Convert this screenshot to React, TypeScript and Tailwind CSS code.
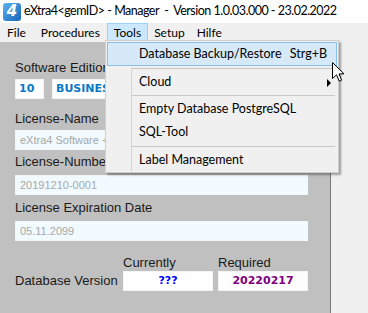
const ui = { fontFamily: 'Lato, "Noto Sans", sans-serif' };
const form = { fontFamily: '"Liberation Sans", Arial, sans-serif' };
const bold = { fontFamily: '"DejaVu Sans", Verdana, sans-serif' };

function AppIcon() {
  return (
    <div className="w-[18px] h-[18px] rounded-[3px] bg-gradient-to-br from-[#5fb4f0] to-[#1266b8] flex items-center justify-center">
      <span className="text-white font-black italic text-[15px] leading-none" style={bold}>
        4
      </span>
    </div>
  );
}

function Label({ children, className = "" }: { children: React.ReactNode; className?: string }) {
  return (
    <div className={`h-4 leading-4 text-[13px] text-[#1a1a1a] whitespace-nowrap ${className}`} style={form}>
      {children}
    </div>
  );
}

function Field({ value, className = "" }: { value: string; className?: string }) {
  return (
    <div
      className={`h-5 w-[293px] bg-[#f0faff] border border-[#f6f6f6] pl-[4px] text-[11px] leading-[18px] text-[#a8a8a8] whitespace-nowrap overflow-hidden ${className}`}
      style={form}
    >
      {value}
    </div>
  );
}

function Sep() {
  return (
    <div className="h-[5px] pl-[26px] pr-[3px] pt-[2px]">
      <div className="h-px bg-[#c8c8c8]" />
    </div>
  );
}

function ToolsMenu() {
  return (
    <div
      className="absolute left-[105px] top-[40px] w-[234px] bg-[#f0f0f0] border border-[#cfcfcf] shadow-[2px_2px_2px_rgba(0,0,0,0.35)] pt-px pb-px text-[12.5px] text-black"
      style={ui}
    >
      <div className="absolute left-[25px] top-[26px] bottom-[1px] w-px bg-[#d4d4d4]" />
      <div className="relative h-6 mx-px bg-[#d6e9f9] border border-[#8cc0ec] flex items-center pl-[31px] pr-[9px] justify-between">
        <span>Database Backup/Restore</span>
        <span>Strg+B</span>
      </div>
      <Sep />
      <div className="relative h-[22px] flex items-center pl-[33px] pr-[4px] justify-between">
        <span>Cloud</span>
        <svg width="6" height="8" viewBox="0 0 6 8" className="mr-[2px] mt-[2px]">
          <path d="M1 0 L5 4 L1 8 Z" fill="#000" />
        </svg>
      </div>
      <Sep />
      <div className="relative h-[23px] flex items-center pl-[33px]">Empty Database PostgreSQL</div>
      <div className="relative h-[23px] flex items-center pl-[33px]">SQL-Tool</div>
      <Sep />
      <div className="relative h-[22px] flex items-center pl-[33px]">Label Management</div>
    </div>
  );
}

function Cursor() {
  return (
    <svg className="absolute left-[332px] top-[62px]" width="13" height="21" viewBox="0 0 13 21">
      <path
        d="M0.5 0.5 L0.5 16.5 L4.5 12.8 L7.2 19.2 L9.6 18.2 L7 11.9 L12 11.9 Z"
        fill="#fff"
        stroke="#000"
        strokeWidth="1"
        strokeLinejoin="round"
      />
    </svg>
  );
}

export default function App() {
  return (
    <div className="relative w-[368px] h-[313px] overflow-hidden bg-[#f0f0f0]">
      {/* title bar */}
      <div className="h-[23px] bg-white flex items-center pl-[3px] gap-[3px]">
        <AppIcon />
        <span className="text-[12.5px] tracking-[-0.5px] text-black whitespace-pre" style={ui}>
          {"eXtra4<gemID> - Manager  -  Version 1.0.03.000 - 23.02.2022"}
        </span>
      </div>

      {/* menu bar */}
      <div className="h-[19px] bg-[#f0f0f0] flex items-stretch text-[12px] text-black" style={ui}>
        <div className="px-[7px] flex items-center">File</div>
        <div className="px-[7px] ml-px flex items-center">Procedures</div>
        <div className="px-[6px] flex items-center bg-[#cce8ff] border border-[#99d1ff]">Tools</div>
        <div className="px-[6px] flex items-center">Setup</div>
        <div className="px-[6px] flex items-center">Hilfe</div>
      </div>

      {/* body */}
      <div className="flex h-[271px]">
        <div className="w-[331px] bg-[#c0c0c0] border-r border-[#7a7a7a] pl-[15px]">
          <Label className="mt-[18px]">Software Edition</Label>
          <div className="mt-[3px] flex gap-[8px]">
            <div
              className="h-5 w-[29px] bg-white border border-[#f4f4f4] pl-[3px] text-[11px] leading-[18px] font-bold text-[#0a78c8]"
              style={bold}
            >
              10
            </div>
            <div
              className="h-5 w-[256px] bg-white border border-[#f4f4f4] pl-[3px] text-[11px] leading-[18px] font-bold text-[#0a78c8]"
              style={bold}
            >
              BUSINESS
            </div>
          </div>

          <Label className="mt-[12px]">License-Name</Label>
          <Field className="mt-[3px]" value="eXtra4 Software + Consulting" />

          <Label className="mt-[4px]">License-Number</Label>
          <Field className="mt-[5px]" value="20191210-0001" />

          <Label className="mt-[5px]">License Expiration Date</Label>
          <Field className="mt-[5px]" value="05.11.2099" />

          <div className="mt-[14px] flex pl-[108px] gap-[5px]">
            <Label className="w-[90px]">Currently</Label>
            <Label className="w-[90px]">Required</Label>
          </div>
          <div className="flex items-center gap-[5px]">
            <Label className="w-[103px]">Database Version</Label>
            <div
              className="h-5 w-[90px] bg-white border border-[#f4f4f4] text-center text-[11px] leading-[18px] font-bold text-[#0000ff]"
              style={bold}
            >
              ???
            </div>
            <div
              className="h-5 w-[90px] bg-white border border-[#f4f4f4] text-center text-[11px] leading-[18px] font-bold text-[#800080]"
              style={bold}
            >
              20220217
            </div>
          </div>
        </div>
        <div className="flex-1 bg-[#f0f0f0]" />
      </div>

      <ToolsMenu />
      <Cursor />
    </div>
  );
}
